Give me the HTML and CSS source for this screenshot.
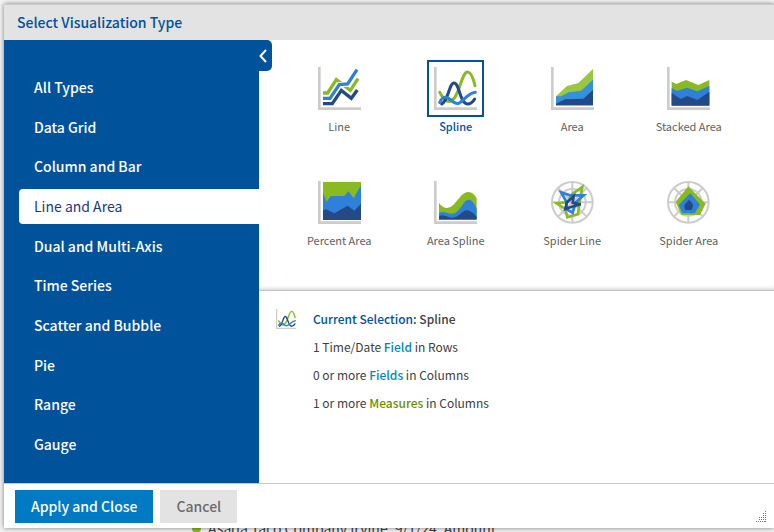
FILE: index.html
```html
<!DOCTYPE html>
<html lang="en">
<head>
<meta charset="utf-8">
<title>Select Visualization Type</title>
<link rel="stylesheet" href="styles.css">
</head>
<body>
<div class="backdrop" aria-hidden="true"><span class="legend"><i class="dot"></i>Asada Taco Company Irvine: 9/1/24: Amount</span></div>
<section class="dialog" role="dialog" aria-labelledby="title">
  <header class="titlebar"><h1 id="title">Select Visualization Type</h1></header>
  <div class="content">
    <nav class="sidebar" aria-label="Categories">
      <button class="collapse" type="button" aria-label="Collapse"><svg viewBox="0 0 8 14"><path d="M7 1 1.500 7 7 13"/></svg></button>
      <ul>
        <li><a href="#all">All Types</a></li>
        <li><a href="#grid">Data Grid</a></li>
        <li><a href="#column">Column and Bar</a></li>
        <li><a href="#line" class="active" aria-current="true">Line and Area</a></li>
        <li><a href="#dual">Dual and Multi-Axis</a></li>
        <li><a href="#time">Time Series</a></li>
        <li><a href="#scatter">Scatter and Bubble</a></li>
        <li><a href="#pie">Pie</a></li>
        <li><a href="#range">Range</a></li>
        <li><a href="#gauge">Gauge</a></li>
      </ul>
    </nav>
    <main class="main">
      <div class="types">
        <button class="type" type="button"><span class="frame"><svg viewBox="0 0 129 129"><path class="axis" d="M4 0V125H129"/><g class="thick"><path class="green" d="M15 78H29L55 38 97 70 120 35"/><path class="halo" d="M15 94H36L64 53 89 51 117 8"/><path class="blue" d="M15 94H36L64 53 89 51 117 8"/><path class="navy" d="M15 110H43L70 70 100 94 118 69"/></g></svg></span>Line</button>
        <button class="type selected" type="button" aria-pressed="true"><span class="frame"><svg viewBox="0 0 129 129"><g id="spline"><path class="axis" d="M4 0V125H129"/><g class="thin"><path class="green" d="M17 76C30 100 45 115 62 92 80 65 85 15 101 15 112 15 118 35 123 56"/><path class="navy" d="M23 111C43 103 45 48 60 48 77 48 76 108 100 111 112 111 118 103 122 96"/><path class="blue" d="M17 106C30 80 42 92 58 105 82 123 92 80 124 76"/></g></g></svg></span>Spline</button>
        <button class="type" type="button"><span class="frame"><svg viewBox="0 0 129 129"><path class="axis" d="M4 0V125H129"/><path fill="#9ac83c" d="M15 88 48 57 82 48 126 6V115H15Z"/><path fill="#3391dd" d="M15 88H30L53 76 90 71 126 38V115H15Z"/><path fill="#234a87" d="M15 110 42 97 97 95 126 69V115H15Z"/></svg></span>Area</button>
        <button class="type" type="button"><span class="frame"><svg viewBox="0 0 129 129"><path class="axis" d="M4 0V125H129"/><path fill="#8aba22" d="M14 44 28 51 57 39 94 54 127 39V115H14Z"/><path fill="#2f80d9" d="M14 63 30 72 60 62 91 73 127 57V115H14Z"/><path fill="#234a87" d="M14 78 41 96 61 87 91 99 127 74V116H14Z"/></svg></span>Stacked Area</button>
        <button class="type" type="button"><span class="frame"><svg viewBox="0 0 129 129"><path class="axis" d="M4 0V125H129"/><path fill="#8aba22" d="M15 3H129V117H15Z"/><path fill="#2f80d9" d="M15 37 26 62 38 45H79L91 31 107 52 129 13V117H15Z"/><path fill="#234a87" d="M15 88 24 85 49 97 89 74 109 89 129 68V117H15Z"/></svg></span>Percent Area</button>
        <button class="type" type="button"><span class="frame"><svg viewBox="0 0 129 129"><path class="axis" d="M4 0V125H129"/><path fill="#8aba22" d="M15 66C30 85 45 85 60 70 80 45 90 33 102 33 115 33 122 42 128 52V114H15Z"/><path fill="#2f80d9" d="M15 96C28 86 45 102 60 97 80 90 88 56 104 56 115 56 122 70 128 82V114H15Z"/><path fill="#234a87" d="M15 106C28 96 40 110 55 110 75 110 85 88 98 88 110 88 120 100 128 107V116H15Z"/></svg></span>Area Spline</button>
        <button class="type" type="button"><span class="frame"><svg viewBox="0 0 129 129"><g class="web"><circle cx="64" cy="64" r="61"/><circle cx="64" cy="64" r="40"/><path d="M64 3V125M3 64H125M21 21 107 107M107 21 21 107"/></g><g class="star"><path class="green" d="M94 18 87 57 81 99 49 109 43 84 17 67 49 63 64 39Z"/><path class="blue" d="M30 34 57 43 98 43 75 63 65 95 49 86 45 60Z"/><path class="navy" d="M68 46 65 65 89 70 60 78 43 84 47 65Z"/></g></svg></span>Spider Line</button>
        <button class="type" type="button"><span class="frame"><svg viewBox="0 0 129 129"><g class="web"><circle cx="64" cy="64" r="61"/><circle cx="64" cy="64" r="40"/><path d="M64 3V125M3 64H125M21 21 107 107M107 21 21 107"/></g><path fill="#8aba22" d="M64 16 116 68 99 102H43L26 62Z"/><path fill="#2f80d9" d="M70 36 99 71 83 97 46 96 35 72Z"/><path fill="#234a87" d="M66 56C76 66 78 70 78 76L74 87H54L52 73Z"/></svg></span>Spider Area</button>
      </div>
      <div class="details">
        <svg class="mini" viewBox="0 0 129 129"><use href="#spline"/></svg>
        <div class="info">
          <h2>Current Selection: <span>Spline</span></h2>
          <p>1 Time/Date <b class="field">Field</b> in Rows</p>
          <p>0 or more <b class="field">Fields</b> in Columns</p>
          <p>1 or more <b class="measure">Measures</b> in Columns</p>
        </div>
      </div>
    </main>
  </div>
  <footer class="footer">
    <button class="btn primary" type="button">Apply and Close</button>
    <button class="btn" type="button">Cancel</button>
    <svg class="grip" viewBox="0 0 11 11"><path d="M9 .5h1M7 2.500h1M9 2.500h1M7 4.500h1M9 4.500h1M5 6.500h1M3 6.500h1M7 6.500h1M9 6.500h1M3 8.500h1M5 8.500h1M7 8.500h1M9 8.500h1M0 10.500h1M2 10.500h1M4 10.500h1M6 10.500h1M8 10.500h2"/></svg>
  </footer>
</section>
</body>
</html>
```
FILE: styles.css
```css
* { box-sizing: border-box; }
body {
  margin: 0;
  min-height: 100vh;
  padding: 4px 0 4px 4px;
  display: flex;
  overflow: hidden;
  background: #f4f4f5;
  font-family: "Noto Sans CJK SC", "Noto Sans", sans-serif;
  color: #404040;
}
button { font: inherit; border: 0; margin: 0; padding: 0; background: none; }
h1, h2, p, ul { margin: 0; padding: 0; }
.backdrop {
  position: absolute;
  inset: 0;
  display: flex;
  align-items: flex-end;
  padding-left: 192px;
  overflow: hidden;
}
.legend {
  display: flex;
  align-items: center;
  gap: 7px;
  height: 16px;
  margin-bottom: -4px;
  font-size: 14px;
  line-height: 16px;
  white-space: nowrap;
}
.dot { width: 9px; height: 9px; border-radius: 50%; background: #8aba22; }
.dialog {
  position: relative;
  flex: 1;
  display: flex;
  flex-direction: column;
  background: #fff;
  border-top: 1px solid #c8c8c8;
  box-shadow: 0 0 5px rgba(0, 0, 0, .5);
}
.titlebar { height: 35px; padding: 0 13px; background: #e3e3e3; }
h1 { font-size: 14px; font-weight: 500; line-height: 34px; color: #00529b; }
.content { flex: 1; display: flex; }
.sidebar {
  position: relative;
  width: 255px;
  padding: 30px 0 21px 15px;
  display: flex;
  background: #00529b;
}
.sidebar ul {
  flex: 1;
  display: flex;
  flex-direction: column;
  justify-content: space-between;
  list-style: none;
}
.sidebar a {
  display: block;
  padding-left: 15px;
  border-radius: 4px 0 0 4px;
  font-size: 14px;
  font-weight: 500;
  line-height: 35px;
  color: #fff;
  text-decoration: none;
}
.sidebar .active { background: #fff; color: #1b3a7a; font-weight: 400; }
.collapse {
  position: absolute;
  left: 100%;
  top: 0;
  width: 13px;
  height: 31px;
  border-radius: 0 5px 5px 0;
  background: #00529b;
}
.collapse svg {
  display: block;
  width: 8px;
  height: 14px;
  fill: none;
  stroke: #fff;
  stroke-width: 2;
}
.main { flex: 1; display: flex; flex-direction: column; }
.types {
  height: 251px;
  padding: 20px 27px 0 22px;
  display: grid;
  grid-template-columns: repeat(4, 1fr);
  grid-auto-rows: 114px;
  border-bottom: 1px solid #c4c4c4;
  box-shadow: inset 0 -4px 4px -3px rgba(0, 0, 0, .2);
}
.type {
  display: flex;
  flex-direction: column;
  align-items: center;
  justify-content: flex-start;
  font-size: 11px;
  line-height: 18px;
  color: #606060;
}
.frame { padding: 5px; border: 2px solid transparent; }
.selected { color: #00529b; font-weight: 500; }
.selected .frame { border-color: #00529b; }
.frame svg { display: block; width: 43px; height: 43px; }
.axis { fill: none; stroke: #ccc; stroke-width: 8; }
.thick { fill: none; stroke-width: 10; }
.thin { fill: none; stroke-width: 9; stroke-linecap: round; }
.star { fill: none; stroke-width: 8; }
.web { fill: none; stroke: #ccc; stroke-width: 6; }
.green { stroke: #8aba22; }
.blue { stroke: #2f80d9; }
.navy { stroke: #234a87; }
.halo { stroke: #fff; stroke-width: 15; }
.details { display: flex; gap: 17px; padding: 14px 17px; }
.mini { width: 20px; height: 20px; margin-top: 4px; }
.info { font-size: 12px; line-height: 28px; }
h2 { font-size: 12px; font-weight: 500; color: #00529b; }
h2 span { color: #404040; }
b { font-weight: 500; }
.field { color: #0089b8; }
.measure { color: #6b8e00; }
.footer {
  display: flex;
  align-items: center;
  gap: 7px;
  height: 45px;
  padding: 0 7px 0 11px;
  border-top: 1px solid #c8c8c8;
}
.btn {
  height: 33px;
  padding: 0 16px;
  background: #e3e3e3;
  color: #6b6b6b;
  font-size: 14px;
  font-weight: 500;
  line-height: 32px;
}
.primary { background: #007ac2; color: #fff; }
.grip {
  width: 11px;
  height: 11px;
  margin-left: auto;
  margin-top: 20px;
  stroke: #777;
  stroke-width: 1;
}
```
